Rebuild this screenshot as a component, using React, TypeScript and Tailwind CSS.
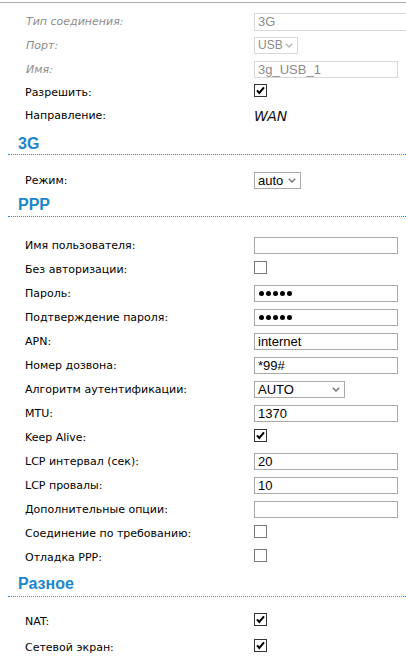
import React from "react";

const LABEL = "font-['DejaVu_Sans',sans-serif] text-[11px] leading-[13px]";
const INPUTF = "font-['Liberation_Sans',Arial,sans-serif] text-[13px] leading-[15px]";

function Row({ cls, label, muted, children }: { cls: string; label: string; muted?: boolean; children?: React.ReactNode }) {
  return (
    <div className={"flex items-center pl-[25px] " + cls}>
      <div className={"w-[229px] shrink-0 " + LABEL + (muted ? " italic text-[#8c8c8c] pl-[1px]" : " text-black")}>{label}</div>
      <div className="flex items-center">{children}</div>
    </div>
  );
}

function TextBox({ value, cls }: { value?: string; cls?: string }) {
  return (
    <div className={"h-[17px] w-[144px] border border-[#a9a9a9] bg-white flex items-center pl-[3px] text-black " + INPUTF + " " + (cls || "")}>
      {value}
    </div>
  );
}

function Dots() {
  return (
    <div className="h-[17px] w-[144px] border border-[#a9a9a9] bg-white flex items-center pl-[4px] gap-[2px]">
      {[0, 1, 2, 3, 4].map((i) => (
        <span key={i} className="block w-[5px] h-[5px] rounded-full bg-black" />
      ))}
    </div>
  );
}

function Chevron({ color }: { color: string }) {
  return (
    <svg width="8" height="5" viewBox="0 0 8 5" className="shrink-0">
      <path d="M0.8 0.8 L4 4 L7.2 0.8" fill="none" stroke={color} strokeWidth="1.4" />
    </svg>
  );
}

function Select({ value, cls, muted, textCls }: { value: string; cls: string; muted?: boolean; textCls?: string }) {
  return (
    <div
      className={
        "h-[17px] flex items-center justify-between pl-[3px] pr-[4px] bg-white border " +
        INPUTF +
        " " +
        cls +
        (muted ? " border-[#d9d9d9] text-[#8c8c8c]" : " border-[#a9a9a9] text-black")
      }
    >
      <span className={textCls}>{value}</span>
      <Chevron color={muted ? "#b5b5b5" : "#707070"} />
    </div>
  );
}

function Check({ on }: { on?: boolean }) {
  return (
    <svg width="13" height="13" viewBox="0 0 13 13" className="-translate-y-[2px]">
      <rect x="0.5" y="0.5" width="12" height="12" fill="#fff" stroke={on ? "#333" : "#7a7a7a"} />
      {on && <path d="M3 6.3 L5.3 9 L10 3.3" fill="none" stroke="#000" strokeWidth="2" />}
    </svg>
  );
}

function Heading({ text, cls }: { text: string; cls: string }) {
  return (
    <div className={"ml-[8px] border-b border-dotted border-[#1f8fd6] pl-[10px] " + cls}>
      <div className="font-['Liberation_Sans',Arial,sans-serif] font-bold text-[16px] leading-[18px] text-[#1a87cc]">{text}</div>
    </div>
  );
}

export default function App() {
  return (
    <div className="w-[406px] h-[660px] bg-white overflow-hidden">
      <div className="h-[2px]" />
      <div className="h-px bg-[#a8a8a8]" />
      <div className="h-[7px]" />
      <Row cls="h-[23px]" label="Тип соединения:" muted>
        <div className={"h-[18px] w-[170px] border border-[#d9d9d9] bg-white flex items-center pl-[3px] text-[#8c8c8c] " + INPUTF}>3G</div>
      </Row>
      <Row cls="h-[24px]" label="Порт:" muted>
        <Select value="USB" cls="w-[44px]" muted textCls="text-[12px]" />
      </Row>
      <Row cls="h-[24px]" label="Имя:" muted>
        <div className={"h-[17px] w-[144px] border border-[#d9d9d9] bg-white flex items-center pl-[3px] text-[#8c8c8c] " + INPUTF}>3g_USB_1</div>
      </Row>
      <Row cls="h-[23px]" label="Разрешить:">
        <Check on />
      </Row>
      <Row cls="h-[23px]" label="Направление:">
        <span className="font-['DejaVu_Sans',sans-serif] italic text-[14px] leading-[16px] text-[#111]">WAN</span>
      </Row>

      <Heading text="3G" cls="h-[28px] pt-[8px]" />
      <div className="h-[13px]" />
      <Row cls="h-[24px]" label="Режим:">
        <Select value="auto" cls="w-[47px]" />
      </Row>

      <Heading text="PPP" cls="h-[25px] pt-[4px]" />
      <div className="h-[16px]" />
      <Row cls="h-[24px]" label="Имя пользователя:">
        <TextBox />
      </Row>
      <Row cls="h-[24px]" label="Без авторизации:">
        <Check />
      </Row>
      <Row cls="h-[24px]" label="Пароль:">
        <Dots />
      </Row>
      <Row cls="h-[24px]" label="Подтверждение пароля:">
        <Dots />
      </Row>
      <Row cls="h-[24px]" label="APN:">
        <TextBox value="internet" />
      </Row>
      <Row cls="h-[24px]" label="Номер дозвона:">
        <TextBox value="*99#" />
      </Row>
      <Row cls="h-[24px]" label="Алгоритм аутентификации:">
        <Select value="AUTO" cls="w-[91px]" />
      </Row>
      <Row cls="h-[24px]" label="MTU:">
        <TextBox value="1370" />
      </Row>
      <Row cls="h-[24px]" label="Keep Alive:">
        <Check on />
      </Row>
      <Row cls="h-[24px]" label="LCP интервал (сек):">
        <TextBox value="20" />
      </Row>
      <Row cls="h-[24px]" label="LCP провалы:">
        <TextBox value="10" />
      </Row>
      <Row cls="h-[24px]" label="Дополнительные опции:">
        <TextBox />
      </Row>
      <Row cls="h-[24px]" label="Соединение по требованию:">
        <Check />
      </Row>
      <Row cls="h-[24px]" label="Отладка PPP:">
        <Check />
      </Row>

      <Heading text="Разное" cls="h-[28px] pt-[6px]" />
      <div className="h-[11px]" />
      <Row cls="h-[26px]" label="NAT:">
        <Check on />
      </Row>
      <Row cls="h-[26px]" label="Сетевой экран:">
        <Check on />
      </Row>
    </div>
  );
}
